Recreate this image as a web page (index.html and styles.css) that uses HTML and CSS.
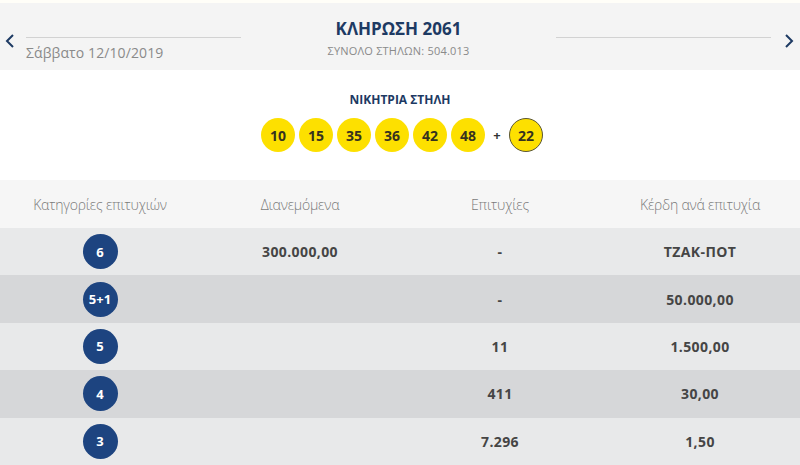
FILE: index.html
```html
<!DOCTYPE html>
<html lang="el">
<head>
<meta charset="utf-8">
<link rel="stylesheet" href="styles.css">
</head>
<body>
<div class="top"></div>
<header class="draw">
  <div class="nav nav-left">
    <svg width="10" height="14" viewBox="0 0 10 14"><path d="M8 1 L2 7 L8 13" fill="none" stroke="#1d3a63" stroke-width="2"/></svg>
  </div>
  <div class="side side-left">
    <div class="rule"></div>
    <div class="date">Σάββατο 12/10/2019</div>
  </div>
  <div class="center">
    <div class="title">ΚΛΗΡΩΣΗ 2061</div>
    <div class="sub">ΣΥΝΟΛΟ ΣΤΗΛΩΝ: 504.013</div>
  </div>
  <div class="side side-right">
    <div class="rule"></div>
  </div>
  <div class="nav nav-right">
    <svg width="10" height="14" viewBox="0 0 10 14"><path d="M2 1 L8 7 L2 13" fill="none" stroke="#1d3a63" stroke-width="2"/></svg>
  </div>
</header>
<section class="win">
  <div class="win-title">ΝΙΚΗΤΡΙΑ ΣΤΗΛΗ</div>
  <div class="balls">
    <span class="ball">10</span>
    <span class="ball">15</span>
    <span class="ball">35</span>
    <span class="ball">36</span>
    <span class="ball">42</span>
    <span class="ball">48</span>
    <span class="plus">+</span>
    <span class="ball bonus">22</span>
  </div>
</section>
<section class="table">
  <div class="row head">
    <div>Κατηγορίες επιτυχιών</div>
    <div>Διανεμόμενα</div>
    <div>Επιτυχίες</div>
    <div>Κέρδη ανά επιτυχία</div>
  </div>
  <div class="row light">
    <div><span class="cat">6</span></div>
    <div>300.000,00</div>
    <div>-</div>
    <div>ΤΖΑΚ-ΠΟΤ</div>
  </div>
  <div class="row dark">
    <div><span class="cat">5+1</span></div>
    <div></div>
    <div>-</div>
    <div>50.000,00</div>
  </div>
  <div class="row light">
    <div><span class="cat">5</span></div>
    <div></div>
    <div>11</div>
    <div>1.500,00</div>
  </div>
  <div class="row dark">
    <div><span class="cat">4</span></div>
    <div></div>
    <div>411</div>
    <div>30,00</div>
  </div>
  <div class="row light">
    <div><span class="cat">3</span></div>
    <div></div>
    <div>7.296</div>
    <div>1,50</div>
  </div>
</section>
</body>
</html>
```
FILE: styles.css
```css
html, body {
  margin: 0;
  padding: 0;
  background: #ffffff;
  font-family: "Open Sans", "Noto Sans", "DejaVu Sans", sans-serif;
}
body {
  width: 800px;
  height: 465px;
  overflow: hidden;
}
.top {
  height: 3px;
  background: #fffef8;
}
.draw {
  height: 67px;
  background: #f4f4f4;
  display: flex;
  align-items: flex-start;
}
.nav {
  height: 67px;
  display: flex;
  align-items: flex-start;
  padding-top: 31px;
  box-sizing: border-box;
}
.nav-left {
  width: 26px;
  padding-left: 5px;
}
.nav-right {
  width: 29px;
  padding-left: 13px;
}
.side {
  width: 215px;
  padding-top: 34px;
}
.rule {
  height: 1px;
  background: #d2d2d2;
}
.date {
  margin-top: 5px;
  font-size: 14px;
  color: #8a8a8a;
  letter-spacing: 0.1px;
}
.center {
  flex: 1;
  text-align: center;
  padding-top: 15px;
}
.title {
  font-size: 17px;
  font-weight: 700;
  color: #1d3a63;
  line-height: 22px;
}
.sub {
  margin-top: 4px;
  font-size: 11px;
  color: #8a8a8a;
  line-height: 14px;
  letter-spacing: 0.2px;
}
.win {
  height: 110px;
  display: flex;
  flex-direction: column;
  align-items: center;
}
.win-title {
  margin-top: 23px;
  font-size: 12px;
  font-weight: 700;
  color: #1d3a63;
  line-height: 14px;
}
.balls {
  margin-top: 11px;
  margin-left: 4px;
  display: flex;
  align-items: center;
  gap: 4px;
}
.ball {
  width: 34px;
  height: 34px;
  border-radius: 50%;
  background: #fde000;
  color: #36321f;
  font-weight: 700;
  font-size: 14px;
  display: flex;
  align-items: center;
  justify-content: center;
  box-sizing: border-box;
}
.ball.bonus {
  border: 1px solid #5a5636;
}
.plus {
  width: 16px;
  text-align: center;
  font-weight: 700;
  font-size: 13px;
  color: #333;
}
.row {
  display: grid;
  grid-template-columns: repeat(4, 1fr);
  align-items: center;
  height: 47.4px;
  text-align: center;
  font-size: 14px;
  font-weight: 700;
  color: #454545;
  letter-spacing: 0.4px;
}
.row > div {
  display: flex;
  justify-content: center;
  align-items: center;
}
.row.head {
  height: 48px;
  background: #f6f6f6;
  font-weight: 300;
  font-size: 14px;
  letter-spacing: -0.2px;
  color: #7a7a7a;
}
.row.light {
  background: #e8e9ea;
}
.row.dark {
  background: #d6d7d9;
}
.cat {
  width: 35px;
  height: 35px;
  border-radius: 50%;
  background: #1d4480;
  color: #ffffff;
  font-size: 13px;
  font-weight: 700;
  letter-spacing: 0;
  display: flex;
  align-items: center;
  justify-content: center;
}
```
